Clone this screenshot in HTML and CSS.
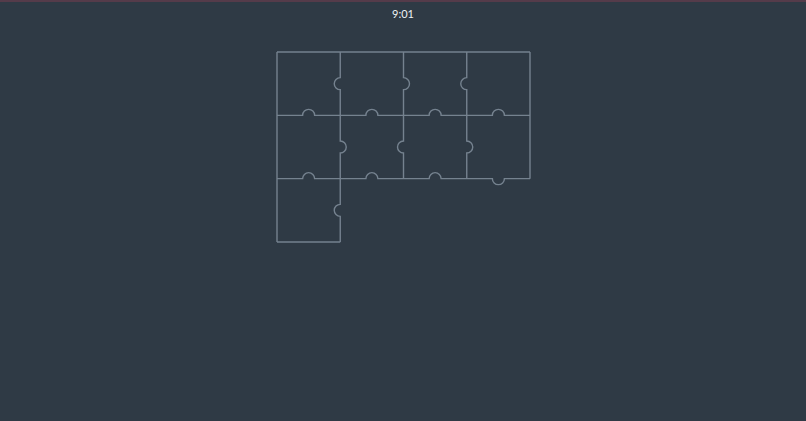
FILE: index.html
```html
<!DOCTYPE html>
<html>
<head>
<meta charset="utf-8">
<link rel="stylesheet" href="styles.css">
</head>
<body>
<div class="app">
  <header class="timer">9:01</header>
  <main class="board">
    <svg class="puzzle" width="269" height="206" viewBox="-8 -8 269 206" xmlns="http://www.w3.org/2000/svg">
      <g fill="none" stroke="#75828f" stroke-width="1.4">
        <path d="M0 0H253"/>
        <path d="M0 0V190"/>
        <path d="M253 0V126.67"/>
        <path d="M0 63.33H25.63A6 6 0 0 1 37.63 63.33H88.88A6 6 0 0 1 100.88 63.33H152.13A6 6 0 0 1 164.13 63.33H215.38A6 6 0 0 1 227.38 63.33H253"/>
        <path d="M0 126.67H25.63A6 6 0 0 1 37.63 126.67H88.88A6 6 0 0 1 100.88 126.67H152.13A6 6 0 0 1 164.13 126.67H215.38A6 6 0 0 0 227.38 126.67H253"/>
        <path d="M0 190H63.25"/>
        <path d="M63.25 0V25.67A6 6 0 0 0 63.25 37.67V89A6 6 0 0 1 63.25 101V152.33A6 6 0 0 0 63.25 164.33V190"/>
        <path d="M126.5 0V25.67A6 6 0 0 1 126.5 37.67V89A6 6 0 0 0 126.5 101V126.67"/>
        <path d="M189.75 0V25.67A6 6 0 0 0 189.75 37.67V89A6 6 0 0 1 189.75 101V126.67"/>
      </g>
    </svg>
  </main>
</div>
</body>
</html>
```

FILE: styles.css
```css
html, body {
  margin: 0;
  padding: 0;
  height: 100%;
  background: #2f3a45;
}

.app {
  min-height: 100%;
  box-sizing: border-box;
  border-top: 2px solid #553b4a;
  display: flex;
  flex-direction: column;
  align-items: center;
  font-family: Lato, "Noto Sans", sans-serif;
}

.timer {
  margin-top: 5px;
  font-size: 11px;
  line-height: 14px;
  color: #eef1f4;
}

.board {
  margin-top: 23px;
  display: flex;
  justify-content: center;
}

.puzzle {
  display: block;
}
```
